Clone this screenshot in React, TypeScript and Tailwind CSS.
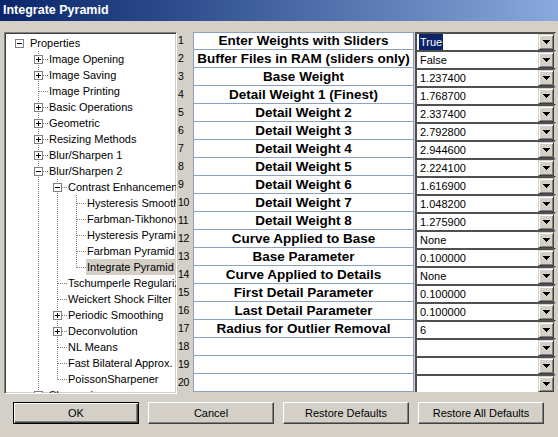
import React from "react";

type TItem = { label: string; level: number; box?: "plus" | "minus"; selected?: boolean };

const tree: TItem[] = [
  { label: "Properties", level: 0, box: "minus" },
  { label: "Image Opening", level: 1, box: "plus" },
  { label: "Image Saving", level: 1, box: "plus" },
  { label: "Image Printing", level: 1 },
  { label: "Basic Operations", level: 1, box: "plus" },
  { label: "Geometric", level: 1, box: "plus" },
  { label: "Resizing Methods", level: 1, box: "plus" },
  { label: "Blur/Sharpen 1", level: 1, box: "plus" },
  { label: "Blur/Sharpen 2", level: 1, box: "minus" },
  { label: "Contrast Enhancement", level: 2, box: "minus" },
  { label: "Hysteresis Smoothing", level: 3 },
  { label: "Farbman-Tikhonov", level: 3 },
  { label: "Hysteresis Pyramid", level: 3 },
  { label: "Farbman Pyramid", level: 3 },
  { label: "Integrate Pyramid", level: 3, selected: true },
  { label: "Tschumperle Regularization", level: 2 },
  { label: "Weickert Shock Filter", level: 2 },
  { label: "Periodic Smoothing", level: 2, box: "plus" },
  { label: "Deconvolution", level: 2, box: "plus" },
  { label: "NL Means", level: 2 },
  { label: "Fast Bilateral Approx.", level: 2 },
  { label: "PoissonSharpener", level: 2 },
  { label: "Sharpening", level: 1, box: "plus" },
  { label: "", level: 1 },
];

function continues(idx: number, level: number): boolean {
  for (let j = idx + 1; j < tree.length; j++) {
    if (tree[j].level < level) return false;
    if (tree[j].level === level) return true;
  }
  return false;
}

function TreeRow({ item, idx }: { item: TItem; idx: number }) {
  const L = item.level;
  const w = 23 + 19 * L;
  const lines: React.ReactNode[] = [];
  for (let k = 1; k < L; k++) {
    if (continues(idx, k)) {
      const x = 13.5 + 19 * k;
      lines.push(<line key={"a" + k} x1={x} y1={0} x2={x} y2={16} stroke="#808080" strokeDasharray="1 1" shapeRendering="crispEdges" />);
    }
  }
  const cx = 13.5 + 19 * L;
  if (L >= 1) {
    const last = !continues(idx, L);
    lines.push(<line key="v" x1={cx} y1={0} x2={cx} y2={last ? 9 : 16} stroke="#808080" strokeDasharray="1 1" shapeRendering="crispEdges" />);
    lines.push(<line key="h" x1={cx} y1={8.5} x2={cx + 9} y2={8.5} stroke="#808080" strokeDasharray="1 1" shapeRendering="crispEdges" />);
  }
  const c = 13 + 19 * L;
  return (
    <div className="flex h-[16px] w-full items-center overflow-hidden whitespace-nowrap">
      <svg width={w} height={16} className="shrink-0">
        {lines}
        {item.box && (
          <g shapeRendering="crispEdges">
            <rect x={cx - 4} y={4.5} width={8} height={8} fill="#ffffff" stroke="#808080" />
            <rect x={c - 2} y={8} width={5} height={1} fill="#000000" />
            {item.box === "plus" && <rect x={c} y={6} width={1} height={5} fill="#000000" />}
          </g>
        )}
      </svg>
      <span className={"min-w-0 overflow-hidden px-[1px] leading-[16px] text-black " + (item.selected ? "bg-[#d4d0c8]" : "")}>{item.label}</span>
    </div>
  );
}

const rows: [string, string][] = [
  ["Enter Weights with Sliders", "True"],
  ["Buffer Files in RAM (sliders only)", "False"],
  ["Base Weight", "1.237400"],
  ["Detail Weight 1 (Finest)", "1.768700"],
  ["Detail Weight 2", "2.337400"],
  ["Detail Weight 3", "2.792800"],
  ["Detail Weight 4", "2.944600"],
  ["Detail Weight 5", "2.224100"],
  ["Detail Weight 6", "1.616900"],
  ["Detail Weight 7", "1.048200"],
  ["Detail Weight 8", "1.275900"],
  ["Curve Applied to Base", "None"],
  ["Base Parameter", "0.100000"],
  ["Curve Applied to Details", "None"],
  ["First Detail Parameter", "0.100000"],
  ["Last Detail Parameter", "0.100000"],
  ["Radius for Outlier Removal", "6"],
  ["", ""],
  ["", ""],
  ["", ""],
];

function DropButton() {
  return (
    <div className="flex w-[16px] shrink-0 items-center justify-center bg-[#d4d0c8] border border-t-[#d4d0c8] border-l-[#d4d0c8] border-r-[#404040] border-b-[#404040] shadow-[inset_1px_1px_0_#ffffff,inset_-1px_-1px_0_#808080]">
      <svg width="7" height="4" viewBox="0 0 7 4" shapeRendering="crispEdges">
        <path d="M0 0H7V1H6V2H5V3H4V4H3V3H2V2H1V1H0Z" fill="#000" />
      </svg>
    </div>
  );
}

function Btn({ label, def }: { label: string; def?: boolean }) {
  return (
    <div
      className={
        "flex h-[22px] w-[126px] items-center justify-center bg-[#d4d0c8] text-[11px] text-black " +
        (def
          ? "border border-black shadow-[inset_1px_1px_0_#ffffff,inset_-1px_-1px_0_#404040,inset_-2px_-2px_0_#808080]"
          : "border border-t-white border-l-white border-r-[#404040] border-b-[#404040] shadow-[inset_-1px_-1px_0_#808080]")
      }
    >
      {label}
    </div>
  );
}

export default function App() {
  return (
    <div className="flex h-[437px] w-[558px] flex-col overflow-hidden bg-[#d4d0c8] font-['Liberation_Sans',Arial,sans-serif]">
      <div className="flex h-[21px] shrink-0 items-center bg-gradient-to-r from-[#0a246a] to-[#8aa9dc] pl-[3px]">
        <span className="text-[12.5px] font-bold text-white">Integrate Pyramid</span>
      </div>
      <div className="flex pl-[4px] pt-[11px]">
        <div className="h-[362px] w-[173px] shrink-0 overflow-hidden border border-t-[#808080] border-l-[#808080] border-r-white border-b-white bg-white shadow-[inset_1px_1px_0_#404040,inset_-1px_-1px_0_#d4d0c8] text-[11px]">
          <div className="pl-[1px] pt-[2px]">
            {tree.map((it, i) => (
              <TreeRow key={i} item={it} idx={i} />
            ))}
          </div>
        </div>
        <div className="grid h-[360px] grid-cols-[16px_221px_142px] grid-rows-[repeat(20,minmax(0,1fr))]">
          {rows.map(([name, val], i) => (
            <React.Fragment key={i}>
              <div className="flex items-center pl-[1px] text-[10.5px] tracking-[-0.3px] text-black">{i + 1}</div>
              <div
                className={
                  "flex items-center justify-center border-x border-b border-[#8aa2c2] bg-white text-[13.5px] font-bold leading-none text-black whitespace-nowrap " +
                  (i === 0 ? "border-t" : "")
                }
              >
                {name}
              </div>
              <div className="flex border-l-2 border-t-2 border-[#505050] border-r-2 border-r-[#d4d0c8] bg-white ml-[1px]">
                <div className="flex flex-1 items-center pl-[2px] text-[11px] text-black">
                  {i === 0 ? <span className="bg-[#0a246a] px-[1px] text-white">{val}</span> : <span className="px-[1px]">{val}</span>}
                </div>
                <DropButton />
              </div>
            </React.Fragment>
          ))}
        </div>
      </div>
      <div className="flex gap-[9px] pl-[13px] pt-[8px]">
        <Btn label="OK" def />
        <Btn label="Cancel" />
        <Btn label="Restore Defaults" />
        <Btn label="Restore All Defaults" />
      </div>
    </div>
  );
}
